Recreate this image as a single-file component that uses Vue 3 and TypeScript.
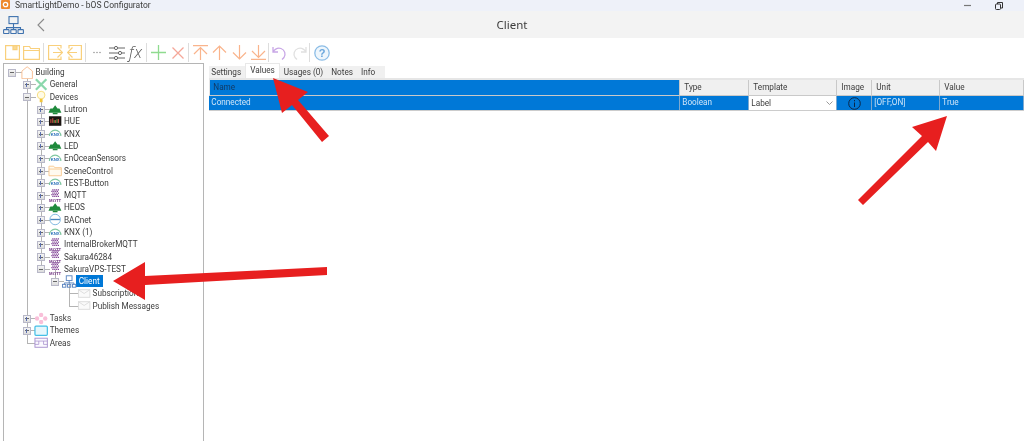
<script setup lang="ts">
type Icon = 'home' | 'tools' | 'bulb' | 'tree' | 'hue' | 'knx' | 'folder' | 'mqtt' | 'bacnet' | 'net' | 'mail' | 'flower' | 'themes' | 'areas'
interface Node { label: string; icon: Icon; selected?: boolean; children?: Node[] }
interface Row { label: string; icon: Icon; selected: boolean; guides: boolean[]; connector: 'none' | 'mid' | 'last'; expander: '' | '+' | '-'; depth: number; open: boolean }

const mqtt = (label: string): Node => ({ label, icon: 'mqtt' })
const tree: Node = {
  label: 'Building', icon: 'home', children: [
    { label: 'General', icon: 'tools' },
    { label: 'Devices', icon: 'bulb', children: [
      { label: 'Lutron', icon: 'tree' },
      { label: 'HUE', icon: 'hue' },
      { label: 'KNX', icon: 'knx' },
      { label: 'LED', icon: 'tree' },
      { label: 'EnOceanSensors', icon: 'knx' },
      { label: 'SceneControl', icon: 'folder' },
      { label: 'TEST-Button', icon: 'knx' },
      mqtt('MQTT'),
      { label: 'HEOS', icon: 'tree' },
      { label: 'BACnet', icon: 'bacnet' },
      { label: 'KNX (1)', icon: 'knx' },
      mqtt('InternalBrokerMQTT'),
      mqtt('Sakura46284'),
      { label: 'SakuraVPS-TEST', icon: 'mqtt', children: [
        { label: 'Client', icon: 'net', selected: true, children: [
          { label: 'Subscriptions', icon: 'mail' },
          { label: 'Publish Messages', icon: 'mail' },
        ] },
      ] },
    ] },
    { label: 'Tasks', icon: 'flower' },
    { label: 'Themes', icon: 'themes' },
    { label: 'Areas', icon: 'areas' },
  ],
}
const leafNoBox = new Set(['Subscriptions', 'Publish Messages', 'Areas'])
const rows: Row[] = []
function walk(n: Node, guides: boolean[], last: boolean, depth: number) {
  const open = !!n.children
  rows.push({
    label: n.label, icon: n.icon, selected: !!n.selected, guides,
    connector: depth === 0 ? 'none' : last ? 'last' : 'mid',
    expander: open ? '-' : leafNoBox.has(n.label) ? '' : '+',
    depth, open,
  })
  n.children?.forEach((c, i) => {
    walk(c, [...guides, !last], i === n.children!.length - 1, depth + 1)
  })
}
walk(tree, [], true, 0)

const tabs = ['Settings', 'Values', 'Usages (0)', 'Notes', 'Info']
</script>

<template>
  <div class="app">
    <div class="titlebar">
      <svg class="logo" width="9" height="9" viewBox="0 0 9 9"><rect width="9" height="9" rx="1" fill="#ee8a2e"/><circle cx="4.500" cy="4.500" r="2.200" fill="none" stroke="#fff" stroke-width="1.300"/></svg>
      <span class="apptitle">SmartLightDemo - bOS Configurator</span>
      <div class="winbtns">
        <svg width="8" height="8" viewBox="0 0 8 8"><path d="M0 3.500h7" stroke="#777" stroke-width="1.200"/></svg>
        <svg width="8" height="8" viewBox="0 0 8 8" fill="none" stroke="#333"><rect x=".5" y="2" width="5" height="5.500" rx="1"/><path d="M2.500 2V.5H7.500V6H6"/></svg>
      </div>
    </div>
    <div class="navbar">
      <svg class="netbig" width="21" height="18" viewBox="0 0 21 18" fill="none" stroke="#3f72ae" stroke-width="1.100"><rect x="6" y=".6" width="9" height="7"/><path d="M10.500 7.600v4M3.500 14v-2.400h14V14M10.500 11.600V14"/><rect x=".6" y="13.600" width="5.400" height="4" rx=".6"/><rect x="7.800" y="13.600" width="5.400" height="4" rx=".6"/><rect x="15" y="13.600" width="5.400" height="4" rx=".6"/></svg>
      <svg class="back" width="8" height="14" viewBox="0 0 8 14" fill="none" stroke="#8a8a8a" stroke-width="1.100"><path d="M7 1 1 7l6 6"/></svg>
      <div class="navtitle">Client</div>
    </div>
    <div class="toolbar">
      <div class="group g1">
        <svg width="15" height="15" viewBox="0 0 15 15" fill="#fff" stroke="#f9d07c" stroke-width="1.200"><path d="M.6.6h13.800v13.800H.6z"/><path d="M8 .6v4h4v-4z" fill="#f9d992"/></svg>
        <svg width="17" height="15" viewBox="0 0 17 15" fill="none" stroke="#f9d07c" stroke-width="1.200"><path d="M.6 14.400V1.500h6l1 2h8.800v10.900zM.6 5.500h15.800"/></svg>
      </div>
      <div class="group g2">
        <svg width="15" height="15" viewBox="0 0 15 15" fill="none" stroke="#f9d07c" stroke-width="1.200"><path d="M13 3.500v-3H.6v13.900H13V11.500M5 7.500h9.500M9.500 2.500l5 5-5 5"/></svg>
        <svg width="15" height="15" viewBox="0 0 15 15" fill="none" stroke="#f9d07c" stroke-width="1.200"><path d="M2 3.500v-3h12.400v13.900H2V11.500M10 7.500H.5M5.500 2.500l-5 5 5 5"/></svg>
      </div>
      <div class="group g3">
        <svg class="dots" width="8" height="3" viewBox="0 0 8 3" fill="#999"><circle cx="1" cy="1.500" r=".8"/><circle cx="4" cy="1.500" r=".8"/><circle cx="7" cy="1.500" r=".8"/></svg>
        <svg width="16" height="14" viewBox="0 0 16 14" fill="none" stroke="#666"><path d="M0 2h5M9 2h7M0 7h9M13 7h3M0 12h5M9 12h7"/><circle cx="7" cy="2" r="1.600"/><circle cx="11" cy="7" r="1.600"/><circle cx="7" cy="12" r="1.600"/></svg>
        <span class="fx">fx</span>
      </div>
      <div class="group g4">
        <svg width="15" height="15" viewBox="0 0 15 15" fill="none" stroke="#8fdb8f" stroke-width="1.300"><path d="M7.500 0v15M0 7.500h15"/></svg>
        <svg width="12" height="12" viewBox="0 0 12 12" fill="none" stroke="#f5a799" stroke-width="1.300"><path d="m.5.5 11 11M11.500.5l-11 11"/></svg>
      </div>
      <div class="group g5">
        <svg width="15" height="15" viewBox="0 0 15 15" fill="none" stroke="#f9b48c" stroke-width="1.200"><path d="M0 .6h15M7.500 3v12M1 9l6.500-6.500L14 9"/></svg>
        <svg width="15" height="15" viewBox="0 0 15 15" fill="none" stroke="#f9b48c" stroke-width="1.200"><path d="M7.500 1v14M1 7.500 7.500 1 14 7.500"/></svg>
        <svg width="15" height="15" viewBox="0 0 15 15" fill="none" stroke="#f9b48c" stroke-width="1.200"><path d="M7.500 14V0M1 7.500 7.500 14 14 7.500"/></svg>
        <svg width="15" height="15" viewBox="0 0 15 15" fill="none" stroke="#f9b48c" stroke-width="1.200"><path d="M0 14.400h15M7.500 12V0M1 6l6.500 6.500L14 6"/></svg>
      </div>
      <div class="group g6">
        <svg width="15" height="14" viewBox="0 0 15 14" fill="none" stroke="#c8a6e6" stroke-width="1.300"><path d="M1 1v5h5M1 6c2-3 5-4.500 8-3.500 4 1.500 5 6 3 9l-2 2"/></svg>
        <svg width="15" height="14" viewBox="0 0 15 14" fill="none" stroke="#e0e0e0" stroke-width="1.300"><path d="M14 1v5H9M14 6c-2-3-5-4.500-8-3.500-4 1.500-5 6-3 9l2 2"/></svg>
      </div>
      <div class="group last">
        <svg width="16" height="16" viewBox="0 0 16 16"><circle cx="8" cy="8" r="7.200" fill="#eef6fc" stroke="#8cbde6" stroke-width="1.300"/><text x="8" y="12" text-anchor="middle" class="qm">?</text></svg>
      </div>
    </div>
    <div class="body">
      <div class="tree">
        <div v-for="r in rows" :key="r.label" class="row">
          <span v-for="(g, i) in r.guides" :key="i" class="cell" :class="{ vline: g }"></span>
          <span class="cell conn" :class="r.connector">
            <i v-if="r.expander" class="exp" :class="{ plus: r.expander === '+' }"></i>
          </span>
          <span class="cell icon" :class="{ stem: r.open }">
            <svg width="15" height="13" viewBox="0 0 15 13" fill="none">
              <template v-if="r.icon === 'home'"><path d="M7.500.5 13 5v8H2V5z" fill="#fff" stroke="#f8bf94"/></template>
              <template v-else-if="r.icon === 'tools'"><path d="m2 1 11 11M13 1 2 12" stroke="#8ad8ac" stroke-width="2.400"/></template>
              <template v-else-if="r.icon === 'bulb'"><circle cx="7.500" cy="5" r="4" fill="#fffbe6" stroke="#f7dc7c"/><path d="M6 9h3v3.500H6z" fill="#f3c53a"/></template>
              <template v-else-if="r.icon === 'tree'"><path d="m7.500 2 2.500 3.500h2l2 4.500H.5l2-4.500h2.500z" fill="#1f8a3c"/><path d="M5 10h5v1.500H5z" fill="#1f8a3c"/></template>
              <template v-else-if="r.icon === 'hue'"><rect x="1" y="1" width="13" height="10" fill="#1b1512"/><path d="M3 8V4M5 8V3M8 8V5M11 8V4" stroke="#d8554a"/><path d="M6.500 8V5M9.500 8V4" stroke="#6ab04c"/></template>
              <template v-else-if="r.icon === 'knx'"><path d="M1.500 9a6 6 0 0 1 12 0" stroke="#7fc7a0" stroke-width="1.200"/><rect x="3" y="5.500" width="9" height="4" fill="#fff"/><text x="7.500" y="9.500" text-anchor="middle" class="micro" fill="#2f74bb">KNX</text></template>
              <template v-else-if="r.icon === 'folder'"><path d="M1 12V2h5l1 1.500h7V12zM1 5h13" stroke="#f9cb94" fill="#fffaf0"/></template>
              <template v-else-if="r.icon === 'mqtt'"><path d="M4.500.5h7M3.500 2.200h7M4.500 3.900h7M3.500 5.600h7M4.500 7.300h7" stroke="#7d3d91" stroke-width="1.300" stroke-dasharray="1.300 .7"/><text x="7.500" y="13" text-anchor="middle" class="micro" fill="#6d2f7f">MQTT</text></template>
              <template v-else-if="r.icon === 'bacnet'"><circle cx="7.500" cy="6.500" r="5.500" fill="#fff" stroke="#7cb6e0"/><path d="M2.500 6.500h10" stroke="#4a86be" stroke-width="1.400"/></template>
              <template v-else-if="r.icon === 'net'"><rect x="4.500" y=".5" width="6" height="5" stroke="#5f88c2"/><path d="M7.500 5.500V8M2.500 10V8h10v2" stroke="#5f88c2"/><rect x=".5" y="9.500" width="3.500" height="3" stroke="#5f88c2"/><rect x="5.700" y="9.500" width="3.500" height="3" stroke="#5f88c2"/><rect x="11" y="9.500" width="3.500" height="3" stroke="#5f88c2"/></template>
              <template v-else-if="r.icon === 'mail'"><rect x="1.500" y="2.500" width="12" height="8" stroke="#dcdcdc" fill="#fafafa"/><path d="m1.500 2.500 6 4 6-4" stroke="#dcdcdc"/></template>
              <template v-else-if="r.icon === 'flower'"><circle cx="7.500" cy="2.800" r="2.300" fill="#f9bfd9"/><circle cx="7.500" cy="10.200" r="2.300" fill="#f9bfd9"/><circle cx="3.200" cy="6.500" r="2.300" fill="#f9bfd9"/><circle cx="11.800" cy="6.500" r="2.300" fill="#f9bfd9"/><circle cx="7.500" cy="6.500" r="1.600" fill="#fff"/></template>
              <template v-else-if="r.icon === 'themes'"><rect x="1" y="2" width="13" height="9.500" rx="1" stroke="#45bfe6" stroke-width="1.300" fill="#e6f7fc"/></template>
              <template v-else><rect x="1" y="2" width="13" height="9.500" stroke="#a892cf" fill="#fbf9ff"/><path d="M1 5h13M5 5v3.500M10 5v3.500M1 8.500h4M10 8.500h4" stroke="#a892cf" stroke-width=".8"/></template>
            </svg>
          </span>
          <span class="label" :class="{ sel: r.selected }">{{ r.label }}</span>
        </div>
      </div>
      <div class="panel">
        <div class="tabs">
          <span v-for="t in tabs" :key="t" class="tab" :class="{ active: t === 'Values' }">{{ t }}</span>
        </div>
        <div class="grid">
          <div class="gh name">Name</div>
          <div class="gh">Type</div>
          <div class="gh">Template</div>
          <div class="gh">Image</div>
          <div class="gh">Unit</div>
          <div class="gh">Value</div>
          <div class="gc">Connected</div>
          <div class="gc">Boolean</div>
          <div class="gc combo">
            <span>Label</span>
            <svg width="7" height="4" viewBox="0 0 7 4" fill="none" stroke="#999"><path d="m.5.5 3 3 3-3"/></svg>
          </div>
          <div class="gc center">
            <svg width="13" height="13" viewBox="0 0 13 13" fill="none" stroke="#0b2545"><circle cx="6.500" cy="6.500" r="5.800"/><path d="M6.500 5.500v4.500M6.500 3v1.300"/></svg>
          </div>
          <div class="gc">[OFF,ON]</div>
          <div class="gc">True</div>
        </div>
      </div>
    </div>
    <svg class="annot" width="1024" height="441" viewBox="0 0 1024 441">
      <g fill="#e71f1f">
        <path d="M273 78 308 92 298 100 329 136 322 142 292 105 282 113Z" />
        <path d="M947 116 936 151 928 142 863 205 858 200 922 136 912 127Z" />
        <path d="M113 281 145 262 145 276 327 267 327 275 145 285 145 300Z" />
      </g>
    </svg>
  </div>
</template>

<style>
html, body { margin: 0; background: #fff; }
</style>

<style scoped>
.app {
  position: relative;
  width: 1024px;
  height: 441px;
  overflow: hidden;
  background: #fff;
  font-family: Roboto, "Liberation Sans", sans-serif;
  font-size: 8.200px;
  color: #3c3c3c;
  display: flex;
  flex-direction: column;
  filter: blur(0.25px);
}
.titlebar {
  height: 11px;
  flex: none;
  background: #eef1f9;
  display: flex;
  align-items: center;
  line-height: 11px;
  font-size: 8.500px;
}
.logo { margin: -3px 5px 0 1px; }
.winbtns { margin-left: auto; display: flex; gap: 23px; padding-right: 21px; }
.navbar {
  height: 27px;
  flex: none;
  background: #f3f3f3;
  display: flex;
  align-items: center;
  position: relative;
  padding-left: 3px;
}
.netbig { margin-top: 1px; }
.back { margin-left: 13px; }
.navtitle {
  position: absolute;
  left: 0;
  right: 0;
  text-align: center;
  font-size: 11.500px;
  font-family: "Noto Sans", sans-serif;
}
.toolbar {
  height: 25px;
  flex: none;
  display: flex;
  align-items: center;
  padding: 4px 0 0 5px;
  box-sizing: border-box;
}
.group {
  display: flex;
  align-items: center;
  height: 19px;
  margin-right: 4px;
  border-right: 1px solid #ddd;
}
.g1 { gap: 3px; padding-right: 3px; }
.g2 { gap: 4px; padding-right: 3px; margin-right: 0; }
.g3 { gap: 4px; padding: 0 3px 0 7px; }
.g4 { gap: 6px; padding-right: 4px; margin-right: 4px; }
.g5 { gap: 4.300px; padding-right: 2px; margin-right: 3px; }
.g6 { gap: 5px; padding-right: 2px; margin-right: 4px; }
.group.last { border: none; }
.dots { margin-right: 4px; }
.fx { font-family: "Open Sans", sans-serif; font-style: italic; font-weight: 300; font-size: 16px; letter-spacing: 1px; color: #555; line-height: 15px; width: 14px; }
.qm { font: bold 11px "Liberation Sans", sans-serif; fill: #6aa6dc; }
.micro { font: bold 4.500px "Liberation Sans", sans-serif; }
.body { flex: 1; display: flex; min-height: 0; }
.tree {
  width: 198px;
  margin-left: 3px;
  border: 1px solid #b5b5b5;
  border-bottom: none;
  padding: 2px 0 0 1.300px;
  flex: none;
}
.row {
  height: 12.300px;
  display: flex;
  align-items: center;
  white-space: nowrap;
}
.cell {
  width: 14.300px;
  height: 100%;
  flex: none;
  position: relative;
  display: block;
}
.vline::before, .conn.mid::before, .conn.last::before, .stem::after {
  content: "";
  position: absolute;
  left: 7px;
  top: 0;
  bottom: 0;
  border-left: 1px solid #b4b4b4;
}
.conn.last::before { bottom: 50%; }
.stem::after { top: 60%; }
.conn::after {
  content: "";
  position: absolute;
  left: 7px;
  right: -2px;
  top: 50%;
  border-top: 1px solid #b4b4b4;
}
.exp {
  position: absolute;
  left: 3px;
  top: 50%;
  width: 6px;
  height: 6px;
  margin-top: -3.500px;
  background: linear-gradient(#f4f4f4, #dcdcdc);
  border: 1px solid #b8b8c8;
  z-index: 1;
}
.exp::before {
  content: "";
  position: absolute;
  left: 1px;
  right: 1px;
  top: 2.500px;
  border-top: 1px solid #666;
}
.exp.plus::after {
  content: "";
  position: absolute;
  top: 1px;
  bottom: 1px;
  left: 2.500px;
  border-left: 1px solid #5a6fb0;
}
.icon { display: flex; align-items: center; justify-content: center; }
.icon svg { position: relative; z-index: 1; }
.label { padding: 0 1.500px; line-height: 12px; }
.label.sel { background: #0078d7; color: #fff; padding: 0 3px; margin-left: -1px; }
.panel { flex: 1; padding: 0 0 0 5px; min-width: 0; }
.tabs { display: flex; height: 15px; align-items: flex-end; }
.tab {
  background: #f0f0f0;
  padding: 0 4px;
  height: 12px;
  line-height: 12px;
}
.tab:first-child { padding-left: 2px; }
.tab:last-child { padding-right: 10px; }
.tab.active { background: #fff; height: 15px; line-height: 13px; padding: 0 4px; box-sizing: border-box; border: 1px solid #e8e8e8; border-bottom: none; }
.grid {
  display: grid;
  grid-template-columns: 471px 69px 88px 35px 68px 1fr;
  grid-template-rows: 16px 14px;
  border-top: 2px solid #e6e6e6;
  border-bottom: 1px solid #ccc;
}
.gh {
  background: #f0f0f0;
  border-right: 1px solid #c9c9c9;
  border-bottom: 1px solid #c9c9c9;
  padding-left: 4px;
  line-height: 15px;
}
.gh.name { background: #0078d7; color: #113a66; border-left: 1px solid #e6e6e6; padding-left: 3px; }
.gc {
  background: #0078d7;
  color: #cfe5f8;
  border-right: 1px solid #7fa9cf;
  padding-left: 2px;
  line-height: 13px;
}
.combo {
  background: #fff;
  color: #3c3c3c;
  display: flex;
  align-items: center;
  justify-content: space-between;
  padding-right: 3px;
}
.center { display: flex; align-items: center; justify-content: center; padding: 0; }
.annot { position: absolute; left: 0; top: 0; pointer-events: none; }
</style>
